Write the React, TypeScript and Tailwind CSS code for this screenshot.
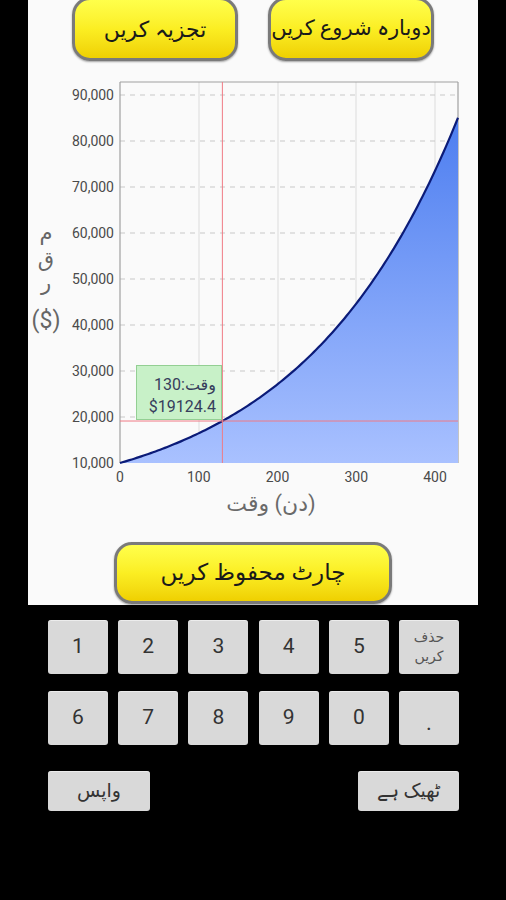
import React from "react";

const X0 = 120;
const Y0 = 463;
const sx = 0.7875;
const sy = 0.0046;
const k = Math.log(1.91244) / 130;

function px(t: number) {
  return X0 + t * sx;
}
function py(v: number) {
  return Y0 - (v - 10000) * sy;
}

function buildCurve() {
  const pts: string[] = [];
  for (let t = 0; t <= 429; t += 3) {
    const v = 10000 * Math.exp(k * t);
    pts.push(`${px(t).toFixed(2)},${py(v).toFixed(2)}`);
  }
  const vEnd = 10000 * Math.exp(k * 429.2);
  pts.push(`${px(429.2).toFixed(2)},${py(vEnd).toFixed(2)}`);
  return pts;
}

function Chart() {
  const pts = buildCurve();
  const line = "M" + pts.join(" L");
  const area = line + ` L458,463 L120,463 Z`;
  const yTicks = [90000, 80000, 70000, 60000, 50000, 40000, 30000, 20000, 10000];
  const xTicks = [0, 100, 200, 300, 400];
  const cx = px(130);
  const cy = py(19124.4);
  return (
    <svg width="450" height="430" viewBox="28 61 450 430" className="block">
      <defs>
        <linearGradient id="fillg" x1="0" y1="118" x2="0" y2="463" gradientUnits="userSpaceOnUse">
          <stop offset="0" stopColor="#4d7ef0" />
          <stop offset="1" stopColor="#a9c1ff" />
        </linearGradient>
      </defs>
      {[199, 278, 356, 435].map((x) => (
        <line key={x} x1={x} y1={82} x2={x} y2={463} stroke="#dcdcdc" strokeWidth="1" />
      ))}
      {yTicks.slice(0, 8).map((v) => (
        <line
          key={v}
          x1={120}
          y1={py(v)}
          x2={458}
          y2={py(v)}
          stroke="#c8c8c8"
          strokeWidth="1"
          strokeDasharray="5 5"
        />
      ))}
      <line x1={120} y1={82} x2={458} y2={82} stroke="#a0a0a0" strokeWidth="1.2" />
      <line x1={120} y1={82} x2={120} y2={463} stroke="#a0a0a0" strokeWidth="1.2" />
      <line x1={458} y1={82} x2={458} y2={463} stroke="#a0a0a0" strokeWidth="1.2" />
      <path d={area} fill="url(#fillg)" />
      <path d={line} fill="none" stroke="#0b1b78" strokeWidth="2.2" />
      <line x1={cx} y1={82} x2={cx} y2={463} stroke="#ef7a85" strokeWidth="1" />
      <line x1={120} y1={cy} x2={458} y2={cy} stroke="#ef7a85" strokeWidth="1" />
      {yTicks.map((v) => (
        <text
          key={v}
          x={114}
          y={py(v) + 5}
          textAnchor="end"
          fontSize="14"
          fill="#4a4a4a"
          fontFamily="Roboto, 'DejaVu Sans', sans-serif"
        >
          {v.toLocaleString("en-US")}
        </text>
      ))}
      {xTicks.map((t) => (
        <text
          key={t}
          x={px(t)}
          y={482}
          textAnchor="middle"
          fontSize="14"
          fill="#4a4a4a"
          fontFamily="Roboto, 'DejaVu Sans', sans-serif"
        >
          {t}
        </text>
      ))}
      <g fill="#666" fontFamily="'DejaVu Sans', sans-serif" fontSize="21" textAnchor="middle">
        <text x={46} y={240}>م</text>
        <text x={46} y={266}>ق</text>
        <text x={46} y={290}>ر</text>
        <text x={46} y={328} fontFamily="Roboto, 'DejaVu Sans', sans-serif" fontSize="23">($)</text>
      </g>
    </svg>
  );
}

function YellowButton({ label, className }: { label: string; className: string }) {
  return (
    <div
      className={
        "flex items-center justify-center overflow-hidden whitespace-nowrap rounded-[18px] border-[3px] border-[#7a7a7a] bg-linear-to-b from-[#ffff4a] via-[#fbee22] to-[#efd000] text-[#1a1a1a] shadow-[0_1px_2px_rgba(0,0,0,0.35)] " +
        className
      }
      dir="rtl"
    >
      {label}
    </div>
  );
}

function Key({ children, className = "" }: { children: React.ReactNode; className?: string }) {
  return (
    <div
      className={
        "flex items-center justify-center rounded-[3px] bg-[#d9d9d9] text-[#333] shadow-[inset_0_1px_0_rgba(255,255,255,0.5)] " +
        className
      }
    >
      {children}
    </div>
  );
}

export default function App() {
  const font = { fontFamily: "Roboto, 'DejaVu Sans', sans-serif" };
  return (
    <div className="w-[506px] h-[900px] bg-black overflow-hidden" style={font}>
      <div className="ml-[28px] w-[450px] h-[605px] bg-[#fafafa] overflow-hidden flex flex-col">
        <div className="-mt-[3px] flex h-[64px] pl-[44px] gap-[30px] shrink-0">
          <YellowButton label="تجزیہ کریں" className="w-[166px] h-[64px] text-[22px]" />
          <YellowButton label="دوبارہ شروع کریں" className="w-[166px] h-[64px] text-[21px] tracking-[-0.2px]" />
        </div>
        <div className="relative h-[430px] shrink-0">
          <Chart />
          <div className="absolute left-[108px] top-[304px] w-[86px] h-[55px] bg-[#c8f1c8] border border-[#93cf93] pr-[5px] pt-[8px] text-right text-[16px] leading-[22px] text-[#363d5c]">
            <div dir="rtl">وقت:130</div>
            <div>$19124.4</div>
          </div>
        </div>
        <div className="h-[26px] pl-[36px] flex justify-center items-center text-[22px] leading-[26px] text-[#6a6a6a] shrink-0">
          <span dir="rtl">(دن) وقت</span>
        </div>
        <div className="mt-[25px] pl-[86px] shrink-0">
          <YellowButton label="چارٹ محفوظ کریں" className="w-[278px] h-[62px] text-[23px]" />
        </div>
      </div>
      <div className="mt-[15px] ml-[48px] w-[411px]">
        <div className="grid grid-cols-6 gap-x-[10.2px] gap-y-[17px]">
          {["1", "2", "3", "4", "5"].map((d) => (
            <Key key={d} className="h-[54px] text-[21px]">
              {d}
            </Key>
          ))}
          <Key className="h-[54px] flex-col text-[14px] leading-[19px] text-[#555]">
            <span dir="rtl">حذف</span>
            <span dir="rtl">کریں</span>
          </Key>
          {["6", "7", "8", "9", "0"].map((d) => (
            <Key key={d} className="h-[54px] text-[21px]">
              {d}
            </Key>
          ))}
          <Key className="h-[54px] text-[22px] pt-[8px]">.</Key>
        </div>
        <div className="mt-[26px] flex justify-between">
          <Key className="w-[102px] h-[40px] text-[19px]">
            <span dir="rtl">واپس</span>
          </Key>
          <Key className="w-[101px] h-[40px] text-[19px]">
            <span dir="rtl">ٹھیک ہے</span>
          </Key>
        </div>
      </div>
    </div>
  );
}
